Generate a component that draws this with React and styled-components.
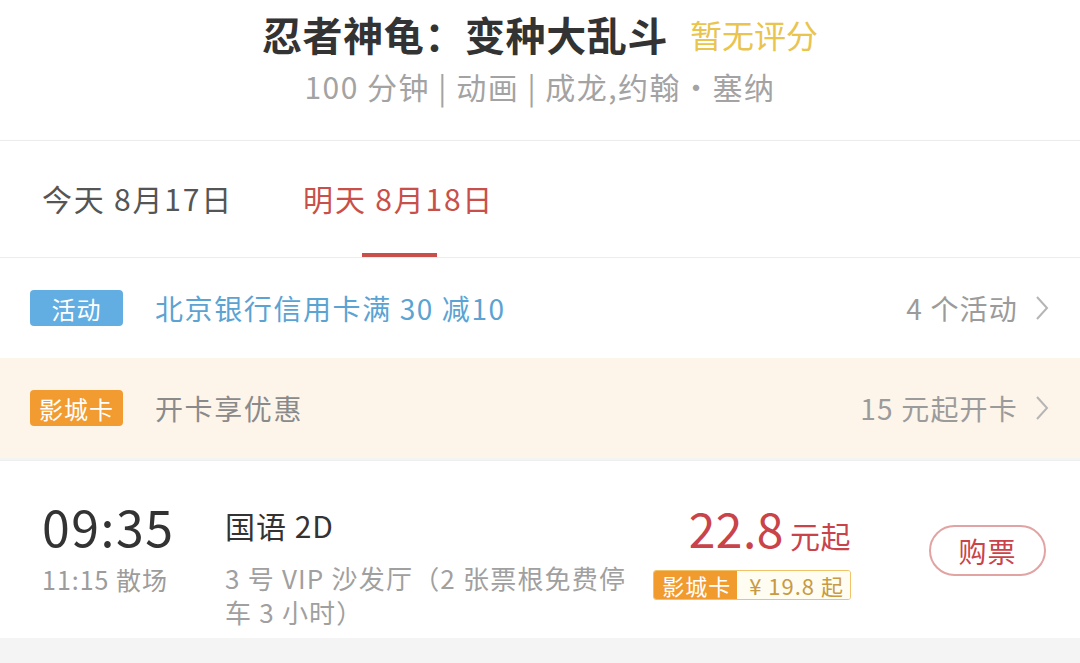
import React from "react";
import styled, { createGlobalStyle } from "styled-components";

const GlobalStyle = createGlobalStyle`
  html, body {
    margin: 0;
    padding: 0;
    background: #f4f4f4;
  }
  body {
    font-family: "Noto Sans CJK SC", "Noto Sans", sans-serif;
    color: #333;
  }
  * { box-sizing: border-box; }
`;

const Page = styled.div`
  width: 1080px;
  height: 663px;
  overflow: hidden;
  background: #f4f4f4;
`;

const Header = styled.header`
  height: 141px;
  background: #fff;
  border-bottom: 1px solid #ececec;
  display: flex;
  flex-direction: column;
  align-items: center;
  padding-top: 9px;
`;

const TitleRow = styled.div`
  display: flex;
  align-items: center;
  gap: 22px;
  height: 50px;
`;

const Title = styled.h1`
  margin: 0;
  font-size: 40px;
  font-weight: 700;
  color: #333;
  letter-spacing: 0.6px;
`;

const Score = styled.span`
  font-size: 32px;
  color: #e9c44f;
`;

const Meta = styled.div`
  margin-top: 7px;
  font-size: 30px;
  line-height: 40px;
  color: #a3a3a3;
  letter-spacing: 1.5px;
`;

const Tabs = styled.nav`
  height: 117px;
  background: #fff;
  border-bottom: 1px solid #ececec;
  display: flex;
  align-items: stretch;
  gap: 70px;
  padding-left: 42px;
`;

const Tab = styled.div`
  position: relative;
  display: flex;
  align-items: center;
  padding-bottom: 2px;
  font-size: 30px;
  letter-spacing: 1.8px;
  color: ${({ $active }) => ($active ? "#c9504a" : "#555")};

  &:after {
    content: "";
    display: ${({ $active }) => ($active ? "block" : "none")};
    position: absolute;
    left: 50%;
    bottom: 0;
    width: 75px;
    height: 4px;
    margin-left: -37px;
    background: #c9504a;
  }
`;

const PromoRow = styled.div`
  height: 100px;
  display: flex;
  align-items: center;
  padding: 0 30px;
  background: ${({ $bg }) => $bg};
`;

const Badge = styled.span`
  width: 93px;
  height: 36px;
  border-radius: 4px;
  display: flex;
  align-items: center;
  justify-content: center;
  background: ${({ $color }) => $color};
  color: #fff;
  font-size: 24px;
  letter-spacing: 1px;
  margin-right: 32px;
  flex-shrink: 0;
`;

const PromoText = styled.span`
  flex: 1;
  font-size: 28px;
  letter-spacing: 1.6px;
  color: ${({ $color }) => $color};
`;

const PromoMore = styled.span`
  display: flex;
  align-items: center;
  gap: 16px;
  font-size: 28px;
  letter-spacing: 1.2px;
  color: #9b9b9b;
`;

const Chevron = () => (
  <svg width="16" height="26" viewBox="0 0 16 26">
    <path d="M3 2 L13 13 L3 24" fill="none" stroke="#b5b5b5" strokeWidth="2" />
  </svg>
);

const Show = styled.section`
  margin-top: 2px;
  height: 178px;
  background: #fff;
  border-top: 1px solid #efefef;
  display: flex;
  align-items: flex-start;
  padding: 28px 34px 0 42px;
`;

const TimeCol = styled.div`
  width: 183px;
  flex-shrink: 0;
`;

const StartTime = styled.div`
  font-size: 50px;
  line-height: 72px;
  color: #333;
  letter-spacing: 1.5px;
`;

const EndTime = styled.div`
  font-size: 25px;
  line-height: 36px;
  letter-spacing: 1px;
  color: #9c9c9c;
`;

const InfoCol = styled.div`
  width: 410px;
  flex-shrink: 0;
`;

const Lang = styled.div`
  font-size: 30px;
  line-height: 72px;
  letter-spacing: 1px;
  color: #333;
`;

const Hall = styled.div`
  font-size: 26px;
  line-height: 34px;
  letter-spacing: 1.2px;
  color: #a0a0a0;
`;

const PriceCol = styled.div`
  margin-left: auto;
  margin-top: 3px;
  display: flex;
  flex-direction: column;
  align-items: flex-end;
`;

const Price = styled.div`
  color: #c9434a;
  font-size: 48px;
  line-height: 70px;
  display: flex;
  align-items: baseline;
  gap: 6px;
  letter-spacing: 0.5px;

  small {
    font-size: 30px;
  }
`;

const CardPrice = styled.div`
  display: flex;
  height: 30px;
  border: 1px solid #f0c36a;
  border-radius: 3px;
  overflow: hidden;
  font-size: 22px;
  letter-spacing: 1px;
`;

const CardLabel = styled.span`
  background: #f19a2e;
  color: #fff;
  padding: 0 6px 0 8px;
  display: flex;
  align-items: center;
`;

const CardValue = styled.span`
  background: #fffcf2;
  color: #c79a43;
  padding: 0 6px 0 12px;
  display: flex;
  align-items: center;
`;

const BuyButton = styled.button`
  margin-left: 78px;
  margin-top: 36px;
  width: 117px;
  height: 51px;
  border: 2px solid #e2a3a3;
  border-radius: 26px;
  background: #fff;
  color: #c9434a;
  font-family: inherit;
  font-size: 28px;
  letter-spacing: 1px;
  padding: 0;
`;

export default function App() {
  return (
    <Page>
      <GlobalStyle />
      <Header>
        <TitleRow>
          <Title>忍者神龟：变种大乱斗</Title>
          <Score>暂无评分</Score>
        </TitleRow>
        <Meta>100 分钟 | 动画 | 成龙,约翰·塞纳</Meta>
      </Header>
      <Tabs>
        <Tab>今天 8月17日</Tab>
        <Tab $active>明天 8月18日</Tab>
      </Tabs>
      <PromoRow $bg="#fff">
        <Badge $color="#62ade2">活动</Badge>
        <PromoText $color="#5aa3d3">北京银行信用卡满 30 减10</PromoText>
        <PromoMore>
          4 个活动 <Chevron />
        </PromoMore>
      </PromoRow>
      <PromoRow $bg="#fdf5ea">
        <Badge $color="#f29b30">影城卡</Badge>
        <PromoText $color="#8a8a8a">开卡享优惠</PromoText>
        <PromoMore>
          15 元起开卡 <Chevron />
        </PromoMore>
      </PromoRow>
      <Show>
        <TimeCol>
          <StartTime>09:35</StartTime>
          <EndTime>11:15 散场</EndTime>
        </TimeCol>
        <InfoCol>
          <Lang>国语 2D</Lang>
          <Hall>3 号 VIP 沙发厅（2 张票根免费停车 3 小时）</Hall>
        </InfoCol>
        <PriceCol>
          <Price>
            22.8<small>元起</small>
          </Price>
          <CardPrice>
            <CardLabel>影城卡</CardLabel>
            <CardValue>¥ 19.8 起</CardValue>
          </CardPrice>
        </PriceCol>
        <BuyButton>购票</BuyButton>
      </Show>
    </Page>
  );
}
